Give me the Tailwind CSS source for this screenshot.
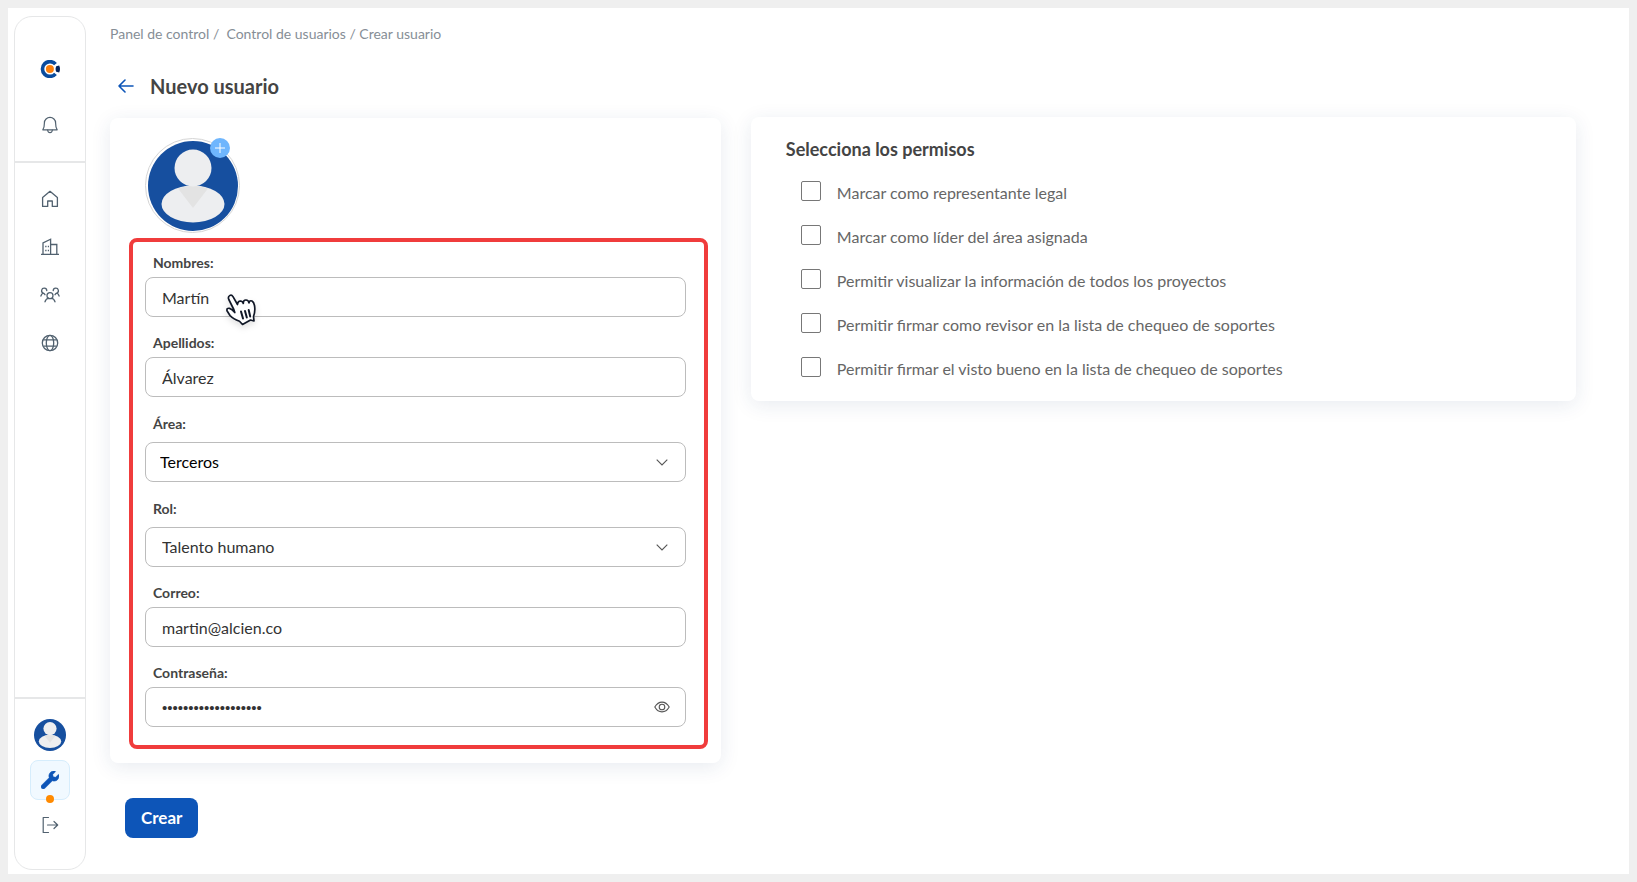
<!DOCTYPE html>
<html lang="es">
  <head>
    <title>Nuevo usuario</title>
    <meta charset="utf-8">
    <meta name="viewport" content="width=device-width, initial-scale=1.0">
    <script src="https://cdn.jsdelivr.net/npm/@tailwindcss/browser@4"></script>
  </head>
  <body class="min-h-screen flex bg-[#efefef] p-2 font-[Lato,sans-serif] text-[#444444]">
    <!-- shared avatar drawing -->
    <svg class="hidden">
      <symbol id="avatar" viewBox="0 0 90 90">
        <circle cx="45" cy="45" r="45" fill="#164f9f" />
        <ellipse cx="45" cy="63" rx="31.5" ry="18.5" fill="#edeef0" />
        <path d="M30 47.500Q45 42 60 47.500L45 67Z" fill="#e3e3e3" />
        <circle cx="45" cy="27" r="18.500" fill="#edeef0" />
      </symbol>
    </svg>

    <div class="flex-1 flex bg-white pl-1.5">
      <nav class="flex flex-col w-[72px] mt-2 mb-1 border border-[#e6e7e8] rounded-[18px] text-[#51616f]">
        <div class="flex flex-col items-center gap-[38px] pt-[43px] pb-[27px] border-b-2 border-[#e6e7e8]">
          <a href="#" aria-label="Inicio" class="block">
            <svg class="w-5 h-[18px]" viewBox="0 0 20 18">
              <path d="M15.500 4.200A7.400 7.400 0 1 0 15.500 13.800" fill="none" stroke="#0a4c9e" stroke-width="3.600" />
              <circle cx="9.900" cy="9" r="4" fill="#fb7f0d" />
              <path d="M16.200 6.200L19.200 5.600Q20.800 9 19.200 12.400L16.200 11.800Q15 9 16.200 6.200Z" fill="#06245c" />
            </svg>
          </a>
          <a href="#" aria-label="Notificaciones" class="block">
            <svg class="w-4 h-[18px]" viewBox="0 0 16 18" fill="none" stroke="currentColor" stroke-width="1.200" stroke-linejoin="round" stroke-linecap="round">
              <path d="M.8 13.800C2.200 12 2.400 10.500 2.400 7A5.600 5.600 0 0 1 13.600 7C13.600 10.500 13.800 12 15.200 13.800Z" />
              <path d="M5.700 14.200Q6 16.600 8 16.600T10.300 14.200" />
            </svg>
          </a>
        </div>

        <div class="flex-1 flex flex-col items-center gap-[30px] pt-[27px]">
          <a href="#" aria-label="Panel">
            <svg class="size-[18px]" viewBox="0 0 18 18" fill="none" stroke="currentColor" stroke-width="1.300" stroke-linejoin="round">
              <path d="M1.600 7.600L9 1.300L16.400 7.600V16.400H11.300V11H6.700V16.400H1.600Z" />
            </svg>
          </a>
          <a href="#" aria-label="Empresas">
            <svg class="size-[18px]" viewBox="0 0 18 18" fill="none" stroke="currentColor" stroke-width="1.300">
              <path d="M0 16.400H18M2 16.400V5L9.600 1.200V16.400M9.600 6.500H15.800V16.400" />
              <path d="M4.200 8.500H5.500M6.800 8.500H8M4.200 12.500H5.500M6.800 12.500H8" stroke-width="1.500" />
            </svg>
          </a>
          <a href="#" aria-label="Usuarios">
            <svg class="w-5 h-[18px]" viewBox="0 0 20 18" fill="none" stroke="currentColor" stroke-width="1.300" stroke-linecap="round">
              <circle cx="10" cy="9.700" r="3" />
              <path d="M5 15.800Q6 12.700 8.300 12.400M11.700 12.400Q14 12.700 15 15.800" />
              <path d="M6.800 4.600A2.600 2.600 0 1 0 3.200 7.200Q1.500 7.800 .9 10M3.200 7.200Q4.300 7.500 5 8.700" />
              <path d="M13.200 4.600A2.600 2.600 0 1 1 16.800 7.200Q18.500 7.800 19.100 10M16.800 7.200Q15.700 7.500 15 8.700" />
            </svg>
          </a>
          <a href="#" aria-label="Idioma">
            <svg class="size-[18px]" viewBox="0 0 18 18" fill="none" stroke="currentColor" stroke-width="1.300">
              <circle cx="9" cy="9" r="7.700" />
              <ellipse cx="9" cy="9" rx="3.700" ry="7.700" />
              <path d="M2.200 5.900H15.800M2.200 12.100H15.800" />
            </svg>
          </a>
        </div>

        <div class="flex flex-col items-center pt-5 pb-[35px] border-t-2 border-[#e6e7e8]">
          <a href="#" aria-label="Mi perfil">
            <svg class="size-8"><use href="#avatar" /></svg>
          </a>
          <a href="#" aria-label="Ajustes" class="relative flex items-center justify-center size-10 mt-[9px] rounded-lg border border-[#d6edfc] bg-[#f1f9ff]">
            <svg class="size-[18px]" viewBox="0 0 512 512" fill="#0d55b8" stroke="#0d55b8" stroke-width="16">
              <path d="M507.700 109.100c-2.200-9-13.500-12.100-20.100-5.500l-74.400 74.400-67.900-11.300-11.300-67.900 74.400-74.400c6.600-6.600 3.400-17.900-5.700-20.200-47.400-11.700-99.600.9-136.600 37.900-39.600 39.600-50.600 97.100-34.100 147.200L18.700 402.800c-25 25-25 65.500 0 90.500s65.500 25 90.500 0l213.200-213.200c50.100 16.700 107.500 5.700 147.400-34.200 37.100-37.100 49.700-89.300 37.900-136.800z" />
            </svg>
            <span class="absolute -bottom-1 size-2 rounded-full bg-[#ff8a00]"></span>
          </a>
          <a href="#" aria-label="Salir" class="mt-4">
            <svg class="size-[18px]" viewBox="0 0 18 18" fill="none" stroke="currentColor" stroke-width="1.200" stroke-linecap="round" stroke-linejoin="round">
              <path d="M7.500 1.500H2.200V16.500H7.500M6.500 9H16.500M13 5.500L16.700 9L13 12.500" />
            </svg>
          </a>
        </div>
      </nav>

      <main class="flex-1 pl-6 pr-[53px] pt-4">
        <div class="text-sm leading-5 text-[#868e96] whitespace-pre"><a href="#">Panel de control</a> /  <a href="#">Control de usuarios</a> / <a href="#">Crear usuario</a></div>

        <div class="flex items-center gap-4 mt-7 pl-2">
          <a href="#" aria-label="Volver">
            <svg class="w-4 h-3.5" viewBox="0 0 16 14" fill="none" stroke="#0d55b8" stroke-width="1.600" stroke-linecap="round" stroke-linejoin="round">
              <path d="M15 7H1M7 1L1 7L7 13" />
            </svg>
          </a>
          <h1 class="text-xl leading-7 font-bold">Nuevo usuario</h1>
        </div>

        <div class="flex items-start mt-[17px]">
          <div class="w-5/12 mt-px">
            <form>
              <section class="pt-5 pb-3.5 pl-[19px] pr-[13px] rounded-lg bg-white shadow-[0_4px_20px_rgba(30,60,110,0.1)]">
                <div class="relative flex items-center justify-center size-[95px] ml-4 rounded-full border border-[#d5d5d5]">
                  <svg class="size-[90px]"><use href="#avatar" /></svg>
                  <button type="button" aria-label="Agregar foto" class="absolute -top-px right-[9px] flex items-center justify-center size-5 rounded-full bg-[#6fb6fd]">
                    <svg class="size-3" viewBox="0 0 12 12" stroke="#ffffff"><path d="M6 1V11M1 6H11" /></svg>
                  </button>
                </div>

                <div class="relative mt-[5px] pt-[11px] pb-[18px] pl-3 pr-[18px] border-4 border-[#f03c3c] rounded-lg">
                  <label for="nombres" class="block pl-2 mb-1 text-sm leading-5 font-bold">Nombres:</label>
                  <input id="nombres" type="text" value="Martín" class="block w-full h-10 px-4 border border-[#bcbcbc] rounded-lg text-[#333333]">

                  <label for="apellidos" class="block pl-2 mt-4 mb-1 text-sm leading-5 font-bold">Apellidos:</label>
                  <input id="apellidos" type="text" value="Álvarez" class="block w-full h-10 px-4 border border-[#bcbcbc] rounded-lg text-[#333333]">

                  <label for="area" class="block pl-2 mt-[17px] mb-2 text-sm leading-5 font-bold">Área:</label>
                  <div class="relative">
                    <select id="area" class="block w-full h-10 px-3.5 border border-[#bcbcbc] rounded-lg bg-white text-black appearance-none">
                      <option>Terceros</option>
                    </select>
                    <svg class="absolute right-[18px] top-[17px] w-3 h-[7px] pointer-events-none" viewBox="0 0 12 7" fill="none" stroke="#555555" stroke-width="1.100"><path d="M.7.700L6 6L11.300.7" /></svg>
                  </div>

                  <label for="rol" class="block pl-2 mt-[17px] mb-2 text-sm leading-5 font-bold">Rol:</label>
                  <div class="relative">
                    <select id="rol" class="block w-full h-10 px-4 border border-[#bcbcbc] rounded-lg bg-white text-[#333333] appearance-none">
                      <option>Talento humano</option>
                    </select>
                    <svg class="absolute right-[18px] top-[17px] w-3 h-[7px] pointer-events-none" viewBox="0 0 12 7" fill="none" stroke="#555555" stroke-width="1.100"><path d="M.7.700L6 6L11.300.7" /></svg>
                  </div>

                  <label for="correo" class="block pl-2 mt-4 mb-1 text-sm leading-5 font-bold">Correo:</label>
                  <input id="correo" type="email" value="martin@alcien.co" class="block w-full h-10 px-4 border border-[#bcbcbc] rounded-lg text-[#333333]">

                  <label for="clave" class="block pl-2 mt-4 mb-1 text-sm leading-5 font-bold">Contraseña:</label>
                  <div class="relative">
                    <input id="clave" type="password" value="1234567890123456789" class="block w-full h-10 px-4 border border-[#bcbcbc] rounded-lg font-['Liberation_Sans',sans-serif] text-[15px] text-[#333333]">
                    <button type="button" aria-label="Mostrar contraseña" class="absolute right-4 top-3.5">
                      <svg class="w-4 h-3" viewBox="0 0 16 12" fill="none" stroke="#555555" stroke-width="1.100">
                        <path d="M.8 6C3 2.200 5.400 1.100 8 1.100S13 2.200 15.200 6C13 9.800 10.600 10.900 8 10.900S3 9.800.8 6Z" />
                        <circle cx="8" cy="6" r="2.800" />
                      </svg>
                    </button>
                  </div>

                  <!-- pointer -->
                  <svg class="absolute left-[92px] top-[51px] w-8 h-9 drop-shadow-md pointer-events-none" viewBox="0 0 32 36" fill="#ffffff" stroke="#111827" stroke-width="1.700" stroke-linejoin="round" stroke-linecap="round">
                    <path d="M8.800 16.500L3.800 6.500C2.300 2.800 6.200 .8 8 3.600L12.500 11.500Q13 7.500 16 8.200Q18 8.600 18.300 10.500Q18.300 6.800 21 7Q23.500 7.200 24 9.800Q24.500 7 27 8Q28.800 9 29.500 12.500Q30.500 18 28.500 23.500L29 28L25.500 27L17.500 31.500L14.500 28.200Q8 26 5 22.500L2 17.800Q1.500 14.800 4.500 15.300Q7 15.800 9.800 19.500Z" />
                    <path d="M16 18.500L18 25.500M20 18L21.800 24.500M23.700 17L25.200 23.500" stroke-width="2" />
                  </svg>
                </div>
              </section>

              <button type="submit" class="block h-10 mt-[35px] ml-[15px] px-4 rounded-lg bg-[#0d55b8] text-[17px] font-bold text-white">Crear</button>
            </form>
          </div>

          <div class="w-7/12 pl-[30px]">
            <section class="pt-5 pb-5 pl-[35px] rounded-lg bg-white shadow-[0_4px_20px_rgba(30,60,110,0.1)]">
              <h2 class="text-lg leading-6 font-bold">Selecciona los permisos</h2>
              <div class="flex flex-col gap-5 mt-5 pl-[15px] text-[#666666]">
                <label class="flex items-start gap-4 leading-6"><input type="checkbox" class="size-5 shrink-0 appearance-none border border-[#777777] rounded-xs"><span>Marcar como representante legal</span></label>
                <label class="flex items-start gap-4 leading-6"><input type="checkbox" class="size-5 shrink-0 appearance-none border border-[#777777] rounded-xs"><span>Marcar como líder del área asignada</span></label>
                <label class="flex items-start gap-4 leading-6"><input type="checkbox" class="size-5 shrink-0 appearance-none border border-[#777777] rounded-xs"><span>Permitir visualizar la información de todos los proyectos</span></label>
                <label class="flex items-start gap-4 leading-6"><input type="checkbox" class="size-5 shrink-0 appearance-none border border-[#777777] rounded-xs"><span>Permitir firmar como revisor en la lista de chequeo de soportes</span></label>
                <label class="flex items-start gap-4 leading-6"><input type="checkbox" class="size-5 shrink-0 appearance-none border border-[#777777] rounded-xs"><span>Permitir firmar el visto bueno en la lista de chequeo de soportes</span></label>
              </div>
            </section>
          </div>
        </div>
      </main>
    </div>
  </body>
</html>
